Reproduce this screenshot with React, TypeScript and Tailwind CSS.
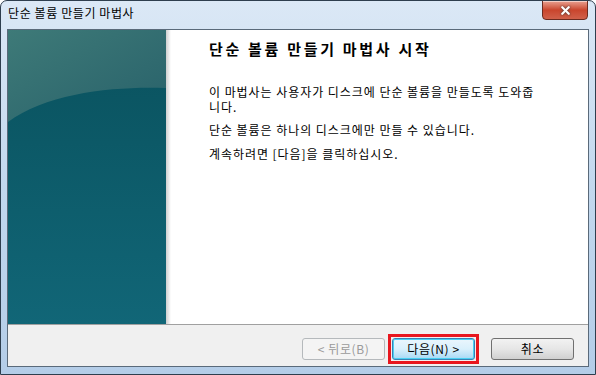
import { X } from "lucide-react";

const ui = { fontFamily: '"Noto Sans CJK KR", "Noto Sans", sans-serif' };

function LeftPanel() {
  return (
    <div className="relative w-[158px] shrink-0 bg-gradient-to-b from-[#0b5460] via-[#0f5f6c] to-[#156d7e]">
      <svg className="absolute inset-0" width="158" height="294" viewBox="0 0 158 294">
        <defs>
          <linearGradient id="top" x1="0" y1="0" x2="1" y2="1">
            <stop offset="0" stopColor="#3e7a78" />
            <stop offset="1" stopColor="#28616a" />
          </linearGradient>
          <linearGradient id="body" x1="0" y1="0" x2="0" y2="1">
            <stop offset="0" stopColor="#09515d" />
            <stop offset="1" stopColor="#116677" />
          </linearGradient>
        </defs>
        <rect width="158" height="294" fill="url(#body)" />
        <path d="M0 0 H158 V58 C110 56 40 62 0 92 Z" fill="url(#top)" />
      </svg>
    </div>
  );
}

function Btn({ label, kind }: { label: string; kind: "off" | "def" | "norm" }) {
  const cls =
    kind === "off"
      ? "border-[#b5b9bc] bg-[#f4f4f4] text-[#9a9a9a]"
      : kind === "def"
      ? "border-[#3c7fb1] bg-gradient-to-b from-[#eaf6fd] via-[#d9f0fc] to-[#a7d9f5] text-black shadow-[inset_0_0_0_1px_#48d0f3]"
      : "border-[#707070] bg-gradient-to-b from-[#f2f2f2] via-[#e6e6e6] to-[#d0d0d0] text-black";
  return (
    <div className={`flex h-[22px] w-[83px] items-center justify-center rounded-[3px] border text-[12px] tracking-[0.6px] ${cls}`}>
      {label}
    </div>
  );
}

export default function App() {
  return (
    <div
      className="relative flex h-[375px] w-[596px] flex-col overflow-hidden rounded-t-[7px] border border-[#2e3e4e] bg-gradient-to-b from-[#dbe8f6] via-[#c2d8ee] to-[#b4cde8]"
      style={ui}
    >
      {/* title bar */}
      <div className="flex h-[28px] shrink-0 items-start">
        <span className="ml-[7px] mt-[5px] text-[12px] leading-[14px] tracking-[0.6px] text-black">단순 볼륨 만들기 마법사</span>
        <div className="ml-auto mr-[7px] mt-[-1px] flex h-[20px] w-[46px] items-center justify-center rounded-b-[4px] border border-[#6b2b20] bg-gradient-to-b from-[#e8a090] via-[#c9452d] to-[#d0604a] shadow-[inset_0_1px_0_rgba(255,255,255,0.5)]">
          <X size={13} strokeWidth={4} className="text-white drop-shadow-[0_0_1px_#333]" />
        </div>
      </div>

      {/* client area */}
      <div className="mx-[6px] mb-[7px] flex flex-1 flex-col border border-[#5a6a7a] bg-white">
        <div className="flex h-[294px]">
          <LeftPanel />
          <div className="w-[5px] shrink-0 bg-gradient-to-r from-[#cfcfcf] to-white" />
          <div className="pl-[38px] pt-[9px] text-black">
            <h1 className="text-[15px] font-bold leading-[20px] tracking-[2.7px]">단순 볼륨 만들기 마법사 시작</h1>
            <div className="mt-[25px] w-[370px] text-[12px] leading-[15px] tracking-[0.95px]">
              <p>이 마법사는 사용자가 디스크에 단순 볼륨을 만들도록 도와줍<br />니다.</p>
              <p className="mt-[8px]">단순 볼륨은 하나의 디스크에만 만들 수 있습니다.</p>
              <p className="mt-[9px]">계속하려면 [다음]을 클릭하십시오.</p>
            </div>
          </div>
        </div>

        {/* footer */}
        <div className="flex flex-1 items-start justify-end border-t border-[#a0a0a0] bg-[#f0f0f0] pr-[14px] pt-[13px]">
          <Btn label="< 뒤로(B)" kind="off" />
          <div className="ml-[3px] mt-[-4px] border-[3px] border-[#e8161e] p-[1px]">
            <Btn label="다음(N) >" kind="def" />
          </div>
          <div className="ml-[12px]">
            <Btn label="취소" kind="norm" />
          </div>
        </div>
      </div>
    </div>
  );
}
